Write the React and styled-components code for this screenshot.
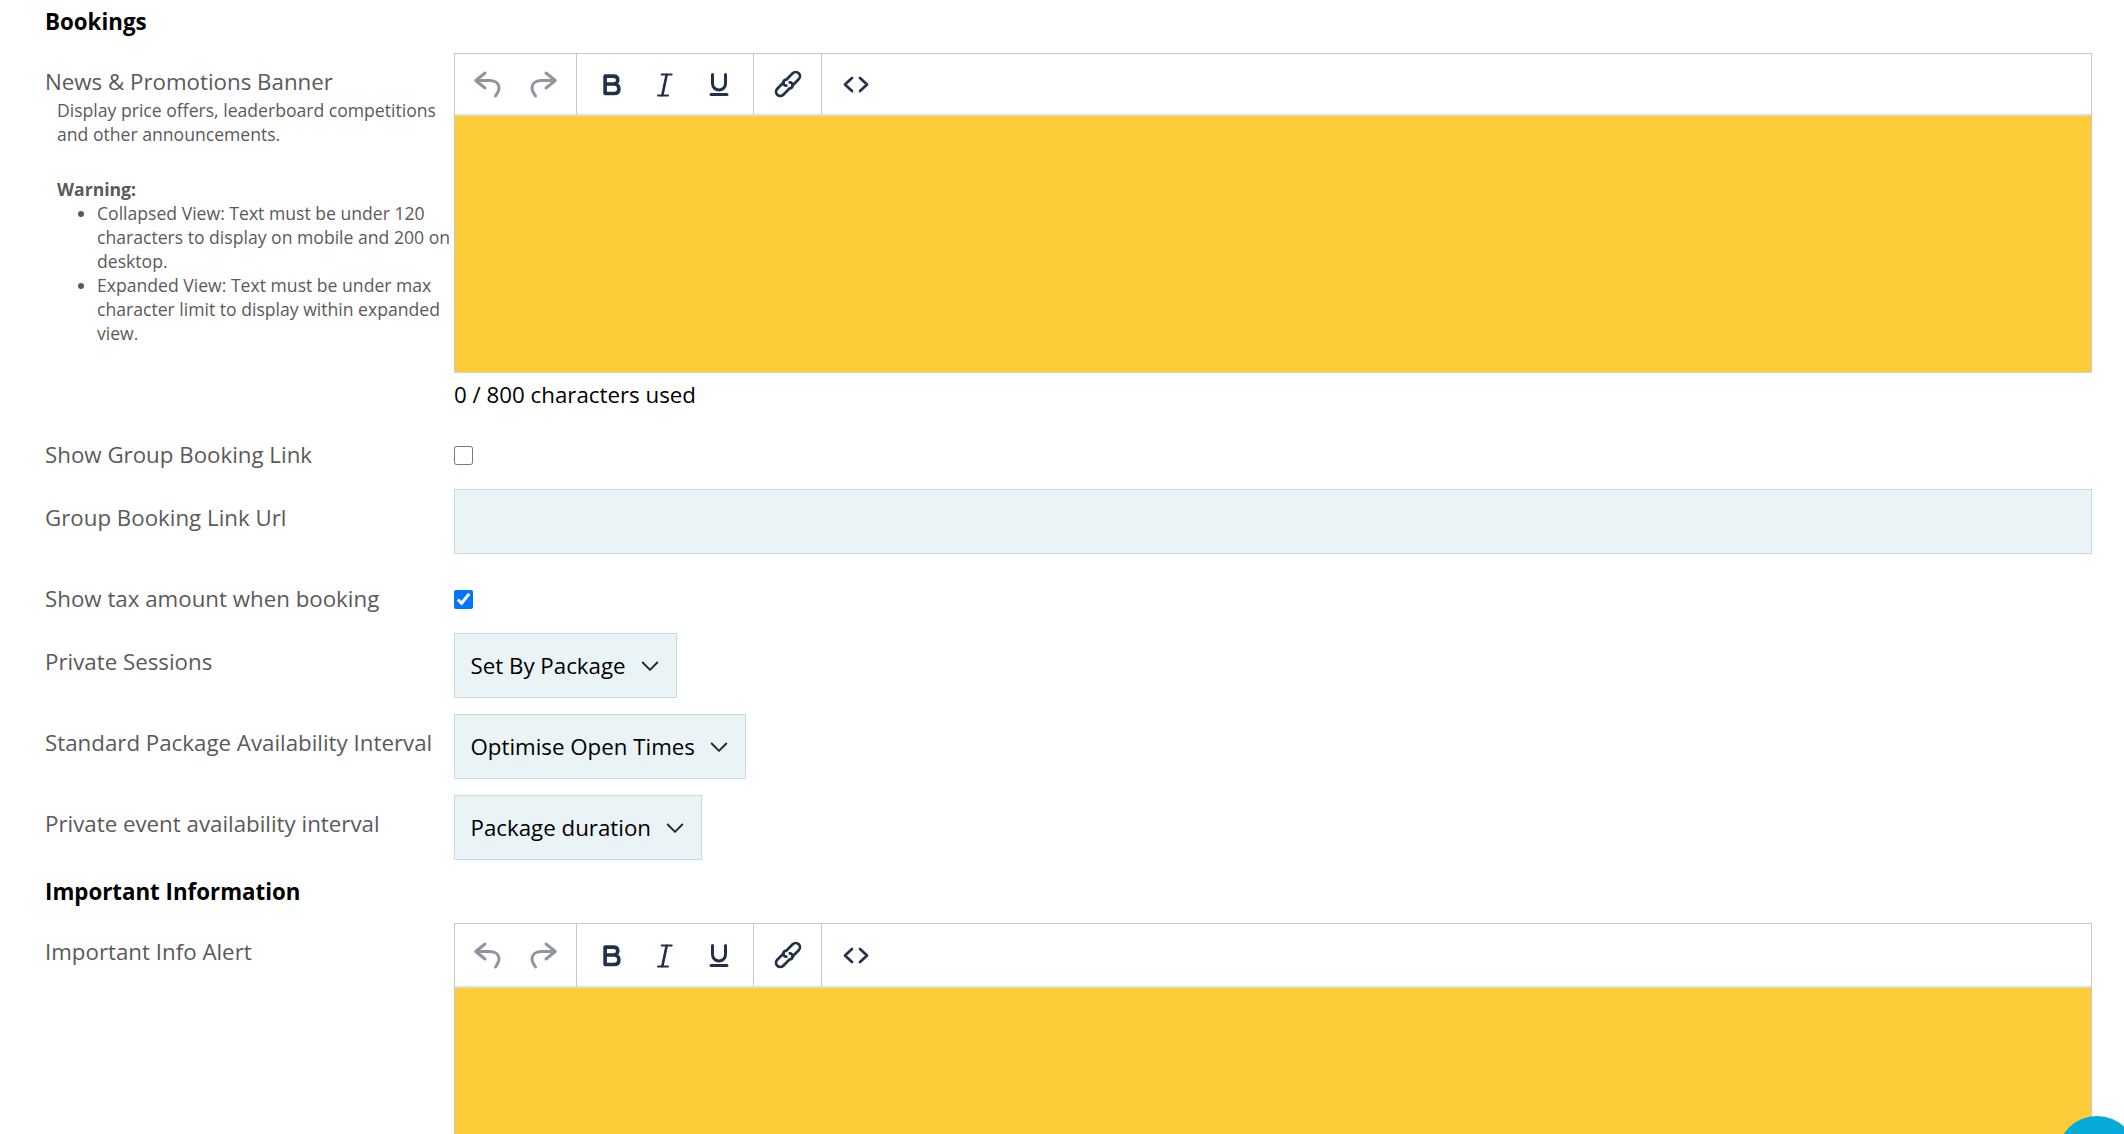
import React from 'react';
import styled, { createGlobalStyle } from 'styled-components';

const GlobalStyle = createGlobalStyle`
  html, body {
    margin: 0;
    height: 100%;
    background: #fff;
    overflow: hidden;
  }

  body {
    font-family: 'Open Sans', 'Liberation Sans', sans-serif;
  }
`;

const UndoIcon = () => (
  <Glyph viewBox="0 0 30 30" $muted>
    <path d="M13 4 L3.7 11.5 L13 19 M3.7 11.5 H18 C24 11.5 27 15 27 19 C27 22 25.5 24 23.5 27" />
  </Glyph>
);

const RedoIcon = () => (
  <Glyph viewBox="0 0 30 30" $muted>
    <path d="M17 4 L26.3 11.5 L17 19 M26.3 11.5 H12 C6 11.5 3 15 3 19 C3 22 4.5 24 6.5 27" />
  </Glyph>
);

const BoldIcon = () => (
  <Glyph viewBox="0 0 30 30" $weight={3.6}>
    <path d="M8.1 7.1 V24.5 M8.1 7.1 H16.5 C19.5 7.1 20.8 9 20.8 11 C20.8 13.5 19 15 16.5 15 H8.1 M16.5 15 H17 C20 15 21.9 17 21.9 19.7 C21.9 22.7 20 24.5 17 24.5 H8.1" />
  </Glyph>
);

const ItalicIcon = () => (
  <Glyph viewBox="0 0 30 30" $weight={2}>
    <path d="M11.7 5.5 H21.7 M8 26.5 H18 M17 5.5 L12.6 26.5" />
    <path d="M16.4 5.5 L12 26.5" />
  </Glyph>
);

const UnderlineIcon = () => (
  <Glyph viewBox="0 0 30 30" $weight={3}>
    <path d="M8.5 5.5 V14.5 a6.5 6.5 0 0 0 13 0 V5.5 M7 25.5 H23" />
  </Glyph>
);

const LinkIcon = () => (
  <Glyph viewBox="0 0 30 30" $weight={2.7}>
    <path d="M19.3 16.7 L25.7 10.3 A4.24 4.24 0 0 0 19.7 4.3 L13.3 10.7 A3 3 0 0 0 13.3 16.7" />
    <path d="M10.7 13.3 L4.3 19.7 A4.24 4.24 0 0 0 10.3 25.7 L16.7 19.3 A3 3 0 0 0 16.7 13.3" />
  </Glyph>
);

const CodeIcon = () => (
  <Glyph viewBox="0 0 30 30" $weight={2.7}>
    <path d="M11 9 L4 15.5 L11 22 M19 9 L26 15.5 L19 22" />
  </Glyph>
);

const ChevronIcon = () => (
  <Chevron viewBox="0 0 18 10">
    <path d="M1.2 1 L9 8.8 L16.8 1" />
  </Chevron>
);

const Editor = ({ tall }) => (
  <EditorBox>
    <Toolbar $tall={tall}>
      <ToolGroup $pad={3.5}>
        <ToolButton $w={57}><UndoIcon /></ToolButton>
        <ToolButton $w={57}><RedoIcon /></ToolButton>
      </ToolGroup>
      <ToolGroup $pad={7.75}>
        <ToolButton $w={53.5}><BoldIcon /></ToolButton>
        <ToolButton $w={53.5}><ItalicIcon /></ToolButton>
        <ToolButton $w={53.5}><UnderlineIcon /></ToolButton>
      </ToolGroup>
      <ToolGroup $pad={0}>
        <ToolButton $w={67}><LinkIcon /></ToolButton>
      </ToolGroup>
      <ToolGroup $pad={0} $last>
        <ToolButton $w={68}><CodeIcon /></ToolButton>
      </ToolGroup>
    </Toolbar>
    <EditorBody $tall={tall} />
  </EditorBox>
);

const App = () => (
  <>
    <GlobalStyle />
    <Page>
      <SectionTitle>Bookings</SectionTitle>

      <Row $mt={17}>
        <LabelCol>
          <Label>News &amp; Promotions Banner</Label>
          <Help>
            <p>
              Display price offers, leaderboard competitions
              <br />
              and other announcements.
            </p>
            <strong>Warning:</strong>
            <ul>
              <li>
                Collapsed View: Text must be under 120 characters to display on
                mobile and 200 on desktop.
              </li>
              <li>
                Expanded View: Text must be under max character limit to display
                within expanded view.
              </li>
            </ul>
          </Help>
        </LabelCol>
        <div>
          <Editor />
          <CharCount>0 / 800 characters used</CharCount>
        </div>
      </Row>

      <CheckRow $mt={32}>
        <PlainLabel>Show Group Booking Link</PlainLabel>
        <CheckBox type="checkbox" readOnly />
      </CheckRow>

      <Row $mt={20}>
        <Label>Group Booking Link Url</Label>
        <TextInput type="text" />
      </Row>

      <CheckRow $mt={31}>
        <PlainLabel>Show tax amount when booking</PlainLabel>
        <CheckBox type="checkbox" defaultChecked />
      </CheckRow>

      <Row $mt={20}>
        <Label>Private Sessions</Label>
        <Select>
          Set By Package
          <ChevronIcon />
        </Select>
      </Row>

      <Row $mt={16}>
        <Label>Standard Package Availability Interval</Label>
        <Select>
          Optimise Open Times
          <ChevronIcon />
        </Select>
      </Row>

      <Row $mt={16}>
        <Label>Private event availability interval</Label>
        <Select>
          Package duration
          <ChevronIcon />
        </Select>
      </Row>

      <SectionTitle $mt={18}>Important Information</SectionTitle>

      <Row $mt={17}>
        <Label>Important Info Alert</Label>
        <Editor tall />
      </Row>
    </Page>
    <ChatBubble />
  </>
);

const Page = styled.div`
  height: 1134px;
  overflow: hidden;
  padding: 8px 32px 0 45px;
  box-sizing: border-box;
`;

const SectionTitle = styled.h2`
  margin: ${p => p.$mt || 0}px 0 0;
  font-size: 22.3px;
  line-height: 28px;
  font-weight: 700;
  color: #000;
`;

const Row = styled.div`
  display: grid;
  grid-template-columns: 409px 1fr;
  align-items: start;
  margin-top: ${p => p.$mt || 0}px;
`;

const CheckRow = styled(Row)`
  align-items: center;
`;

const LabelCol = styled.div`
  min-width: 0;
`;

const PlainLabel = styled.label`
  display: block;
  font-size: 22.3px;
  line-height: 28px;
  color: #5a5a5a;
`;

const Label = styled(PlainLabel)`
  padding-top: 15px;
`;

const Help = styled.div`
  margin-top: 2px;
  padding-left: 12px;
  font-size: 17.6px;
  line-height: 24px;
  color: #5a5a5a;

  p {
    margin: 0 0 31px;
  }

  strong {
    display: block;
  }

  ul {
    margin: 0;
    padding-left: 40px;
  }
`;

const EditorBox = styled.div`
  border: 1px solid #c8c8c8;
  border-bottom-color: #d2d2d2;
`;

const Toolbar = styled.div`
  display: flex;
  height: ${p => (p.$tall ? 62 : 60)}px;
  background: #fff;
  border-bottom: 2px solid #dcdcdc;
  box-sizing: content-box;
`;

const ToolGroup = styled.div`
  display: flex;
  padding: 0 ${p => p.$pad}px;
  border-right: ${p => (p.$last ? 'none' : '1px solid #c8c8c8')};
`;

const ToolButton = styled.div`
  display: flex;
  align-items: center;
  justify-content: center;
  width: ${p => p.$w}px;
`;

const Glyph = styled.svg`
  width: 30px;
  height: 30px;
  fill: none;
  stroke: ${p => (p.$muted ? '#8f969f' : '#22304a')};
  stroke-width: ${p => p.$weight || 3};
  stroke-linecap: round;
  stroke-linejoin: round;
`;

const EditorBody = styled.div`
  height: ${p => (p.$tall ? '300px' : '256px')};
  background: #fecc39;
`;

const CharCount = styled.div`
  margin-top: 8px;
  font-size: 22.3px;
  line-height: 28px;
  color: #000;
`;

const CheckBox = styled.input`
  width: 19px;
  height: 19px;
  margin: 0;
`;

const TextInput = styled.input`
  display: block;
  width: 100%;
  height: 65px;
  box-sizing: border-box;
  background: #eaf3f6;
  border: 1px solid #c5dae1;
  outline: none;
`;

const Select = styled.div`
  display: inline-flex;
  align-items: center;
  justify-self: start;
  gap: 15px;
  height: 65px;
  box-sizing: border-box;
  padding: 0 17px 0 15.5px;
  background: #eaf3f6;
  border: 1px solid #c5dae1;
  font-size: 22.3px;
  color: #000;
`;

const Chevron = styled.svg`
  width: 18px;
  height: 10px;
  fill: none;
  stroke: #222;
  stroke-width: 1.8;
`;

const ChatBubble = styled.div`
  position: fixed;
  left: 2057px;
  top: 1116px;
  width: 80px;
  height: 80px;
  border-radius: 50%;
  background: #06a9d9;
`;

export default App;
